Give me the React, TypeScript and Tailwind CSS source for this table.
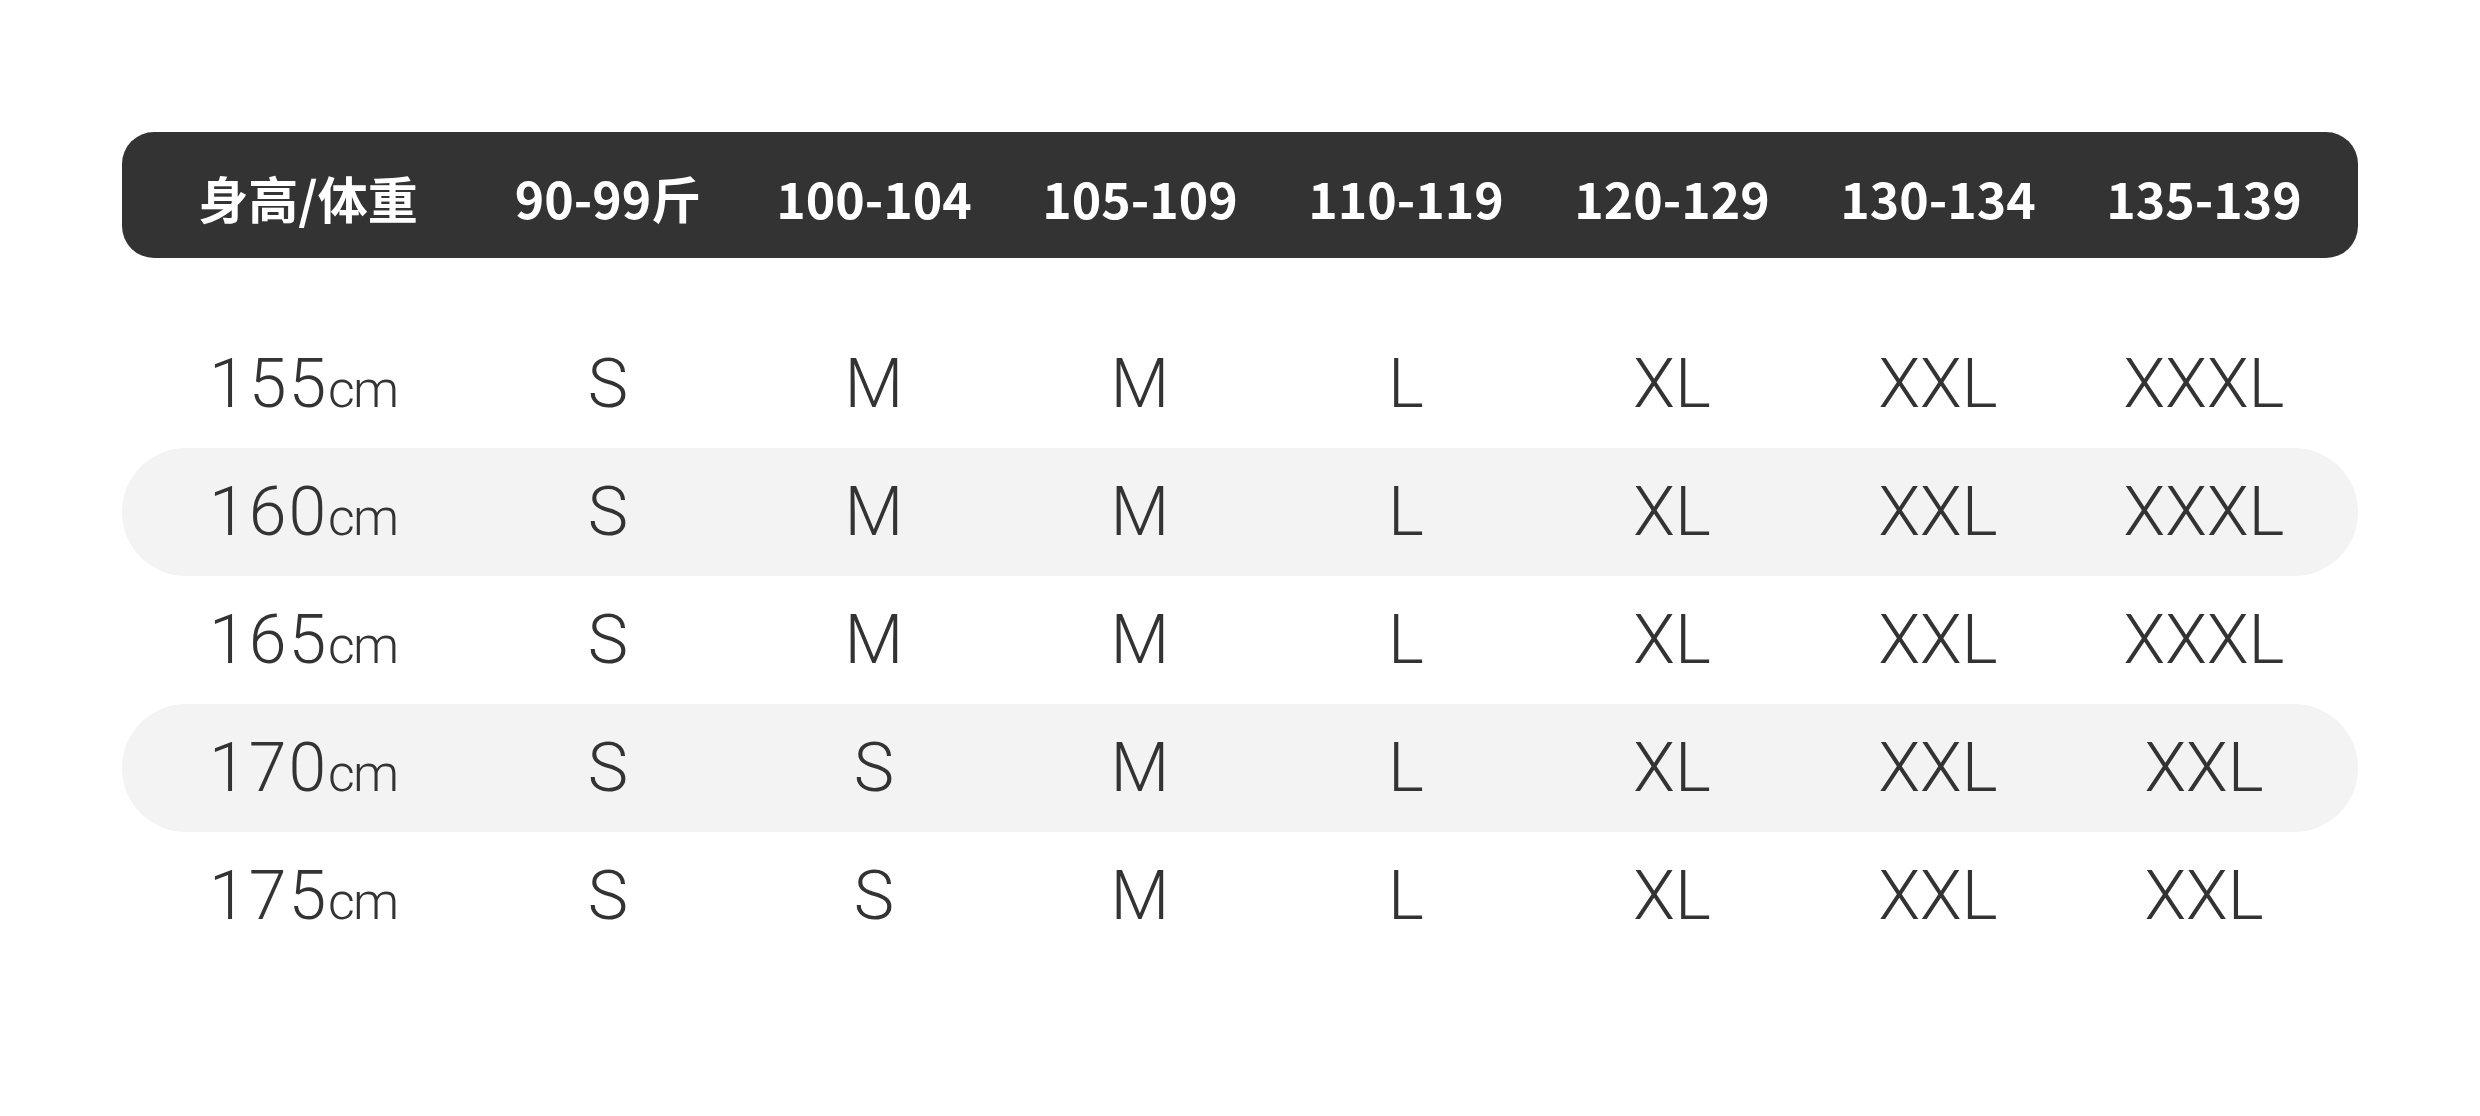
const weights = ['90-99斤', '100-104', '105-109', '110-119', '120-129', '130-134', '135-139'];

const rows = [
  { height: '155', sizes: ['S', 'M', 'M', 'L', 'XL', 'XXL', 'XXXL'] },
  { height: '160', sizes: ['S', 'M', 'M', 'L', 'XL', 'XXL', 'XXXL'] },
  { height: '165', sizes: ['S', 'M', 'M', 'L', 'XL', 'XXL', 'XXXL'] },
  { height: '170', sizes: ['S', 'S', 'M', 'L', 'XL', 'XXL', 'XXL'] },
  { height: '175', sizes: ['S', 'S', 'M', 'L', 'XL', 'XXL', 'XXL'] },
];

const App = () => {
  return (
    <div className="min-h-[1116px] w-full bg-white pt-[132px]">
      <div className="ml-[122px] w-[2236px]">
        {/* Header */}
        <div className="grid h-[126px] grid-cols-[334px_repeat(7,266px)] items-center rounded-[32px] bg-[#333333] pl-[19px] pt-[4px] font-['Noto_Sans_CJK_SC','Noto_Sans',sans-serif] text-[50px] font-bold leading-none text-white">
          <div className="text-center">身高/体重</div>
          {weights.map((w) => (
            <div key={w} className="text-center">
              {w}
            </div>
          ))}
        </div>

        {/* Rows */}
        <div className="mt-[62px] flex flex-col">
          {rows.map((row, i) => (
            <div
              key={row.height}
              className={`grid h-[128px] grid-cols-[334px_repeat(7,266px)] items-center rounded-full pl-[19px] font-['Roboto',sans-serif] text-[68px] font-light leading-none text-[#333333] ${
                i % 2 === 1 ? 'bg-[#f3f3f3]' : ''
              }`}
            >
              <div className="flex items-baseline justify-center pr-[10px]">
                <span className="tracking-[2px]">{row.height}</span>
                <span className="text-[52px] tracking-[-2px]">cm</span>
              </div>
              {row.sizes.map((s, j) => (
                <div key={j} className="text-center">
                  {s}
                </div>
              ))}
            </div>
          ))}
        </div>
      </div>
    </div>
  );
};

export default App;
